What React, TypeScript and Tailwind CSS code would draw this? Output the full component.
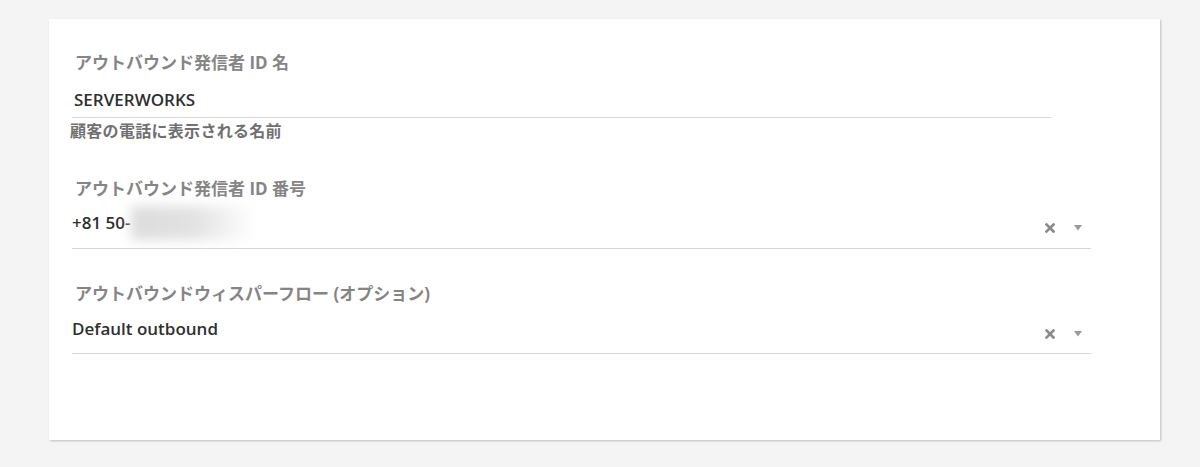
const font = { fontFamily: '"Open Sans", "Noto Sans CJK JP", sans-serif' };

const Label = ({ children, className = "" }: { children: React.ReactNode; className?: string }) => (
  <div className={`pl-[3px] text-[17px] leading-[24px] font-bold text-[#858585] ${className}`}>{children}</div>
);

const SelectIcons = () => (
  <div className="flex items-center gap-[19px] pr-[9px] pt-[10px]">
    <svg width="10" height="10" viewBox="0 0 10 10" className="text-[#8a8a8a]">
      <path d="M1.5 1.5 L8.5 8.5 M8.5 1.5 L1.5 8.5" stroke="currentColor" strokeWidth="2.6" strokeLinecap="square" />
    </svg>
    <svg width="8" height="6" viewBox="0 0 8 6" className="text-[#9a9a9a]">
      <path d="M0 0 H8 L4 5.5 Z" fill="currentColor" />
    </svg>
  </div>
);

export default function App() {
  return (
    <div className="min-h-[467px] bg-[#f4f4f4] pt-[19px] pl-[49px]" style={font}>
      <div className="w-[1111px] h-[421px] bg-white shadow-[1px_1px_2px_rgba(0,0,0,0.22)] pl-[23px] pt-[32px]">
        {/* Caller ID name */}
        <Label>アウトバウンド発信者 ID 名</Label>
        <div className="mt-[13px] w-[979px] border-b border-[#d6d6d6] pb-[5px]">
          <div className="pl-[2px] text-[17px] leading-[24px] font-semibold text-[#2f2f2f]">SERVERWORKS</div>
        </div>
        <div className="mt-[4px] -ml-[2px] text-[16px] leading-[18px] font-bold text-[#707070] tracking-[0.3px]">
          顧客の電話に表示される名前
        </div>

        {/* Caller ID number */}
        <Label className="mt-[37px]">アウトバウンド発信者 ID 番号</Label>
        <div className="mt-[10px] w-[1019px] border-b border-[#d6d6d6] pb-[13px] flex items-center justify-between">
          <div className="flex items-center text-[17px] leading-[24px] font-semibold text-[#2f2f2f]">
            <span>+81 50-</span>
            <span className="inline-block w-[124px] h-[34px] -my-[5px] bg-gradient-to-r from-[#dcdcdc] via-[#e2e2e2] to-white blur-[6px]" />
          </div>
          <SelectIcons />
        </div>

        {/* Whisper flow */}
        <Label className="mt-[33px]">アウトバウンドウィスパーフロー (オプション)</Label>
        <div className="mt-[11px] w-[1019px] border-b border-[#d6d6d6] pb-[12px] flex items-center justify-between">
          <div className="text-[17px] leading-[24px] font-semibold text-[#2f2f2f]">Default outbound</div>
          <SelectIcons />
        </div>
      </div>
    </div>
  );
}
